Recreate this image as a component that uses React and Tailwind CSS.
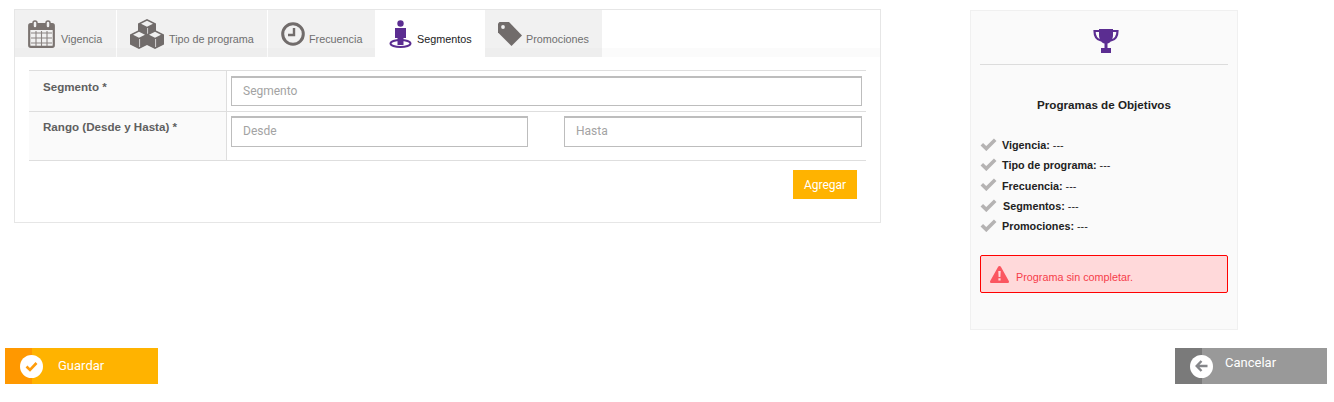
import React from "react";

const IconCalendar = () => (
  <svg width="27" height="28" viewBox="0 0 27 28" fill="none">
    <rect x="1.200" y="4.200" width="24.600" height="22.600" rx="1.500" stroke="#7a7370" strokeWidth="2.200" />
    <rect x="1" y="4" width="25" height="6" fill="#7a7370" />
    <path d="M3 13h21M3 18h21M3 23h21M8 11v15M13.500 11v15M19 11v15" stroke="#8a8482" strokeWidth="1.100" />
    <rect x="5" y="1" width="4" height="7" rx="2" fill="#f0f0f0" stroke="#7a7370" strokeWidth="1.500" />
    <rect x="18" y="1" width="4" height="7" rx="2" fill="#f0f0f0" stroke="#7a7370" strokeWidth="1.500" />
  </svg>
);

const Cube = ({ x, y }) => (
  <g transform={`translate(${x} ${y})`}>
    <path d="M0 4.500 9 0l9 4.500v10L9 19l-9-4.500z" fill="#716c6b" />
    <path d="M3 4.800 9 1.800l6 3-6 3z" fill="#f0f0f0" />
    <path d="M9.600 9v8" stroke="#f0f0f0" strokeWidth="0.800" />
  </g>
);

const IconCubes = () => (
  <svg width="34" height="30" viewBox="0 0 34 30">
    <Cube x="8" y="0" />
    <Cube x="0" y="11" />
    <Cube x="16" y="11" />
  </svg>
);

const IconClock = () => (
  <svg width="24" height="24" viewBox="0 0 24 24" fill="none">
    <circle cx="12" cy="12" r="10.300" stroke="#716c6b" strokeWidth="3" />
    <path d="M13 6v7H7" stroke="#716c6b" strokeWidth="2.400" />
  </svg>
);

const IconPerson = () => (
  <svg width="23" height="28" viewBox="0 0 23 28" fill="none">
    <ellipse cx="11.500" cy="23.500" rx="10" ry="3.500" stroke="#5b2d91" strokeWidth="2" />
    <circle cx="11.500" cy="3.500" r="3.200" fill="#5b2d91" />
    <path d="M6 8h11v10h-2.500v7h-6v-7H6z" fill="#5b2d91" />
  </svg>
);

const IconTag = () => (
  <svg width="24" height="24" viewBox="0 0 24 24">
    <path d="M0 1.500 1.500 0h9.500L24 13.500 13.500 24 0 10.500z" fill="#716c6b" />
    <circle cx="5" cy="5" r="1.900" fill="#f0f0f0" />
  </svg>
);

const IconTrophy = () => (
  <svg width="26" height="24" viewBox="0 0 26 24" fill="none" className="ml-[4px]">
    <path d="M6 2H1.500c0 5 1.500 8.500 6.500 9.500M20 2h4.500c0 5-1.500 8.500-6.500 9.500" stroke="#5b2d91" strokeWidth="2.200" />
    <path d="M6 0h14v6c0 5-3 8-5.500 8.500V19h3.500v5H8v-5h3.500v-4.500C9 14 6 11 6 6z" fill="#5b2d91" />
  </svg>
);

const IconCheck = () => (
  <svg width="17" height="13" viewBox="0 0 17 13" className="relative top-[-1px] shrink-0">
    <path d="M1.800 6.200 6.300 10.600 15.200 1.800" fill="none" stroke="#b5b3b3" strokeWidth="3.600" />
  </svg>
);

const IconWarning = () => (
  <svg width="19" height="17" viewBox="0 0 19 17">
    <path d="M9.500 0c.7 0 1.200.4 1.500 1l7.800 14c.5 1-.1 2-1.200 2H1.400c-1.100 0-1.700-1-1.200-2L8 1c.3-.6.800-1 1.500-1z" fill="#fb5660" />
    <path d="M8.300 5h2.400l-.3 6H8.600zM8.400 12.300h2.200v2.300H8.400z" fill="#ffd9da" />
  </svg>
);

const tabs = [
  { label: "Vigencia", icon: <IconCalendar />, width: "w-[101px] mr-px", gap: "gap-[6px]", pad: "pl-[13px]" },
  { label: "Tipo de programa", icon: <IconCubes />, width: "w-[150px] mr-px", gap: "gap-[5px]", pad: "pl-[13px]" },
  { label: "Frecuencia", icon: <IconClock />, width: "w-[107px]", gap: "gap-[4px]", pad: "pl-[13px]" },
  { label: "Segmentos", icon: <IconPerson />, width: "w-[110px]", gap: "gap-[5px]", pad: "pl-[14px]", active: true },
  { label: "Promociones", icon: <IconTag />, width: "w-[117px]", gap: "gap-[4px]", pad: "pl-[13px]" },
];

const summary = [
  { label: "Vigencia:", gap: "gap-[5px]" },
  { label: "Tipo de programa:", gap: "gap-[5px]" },
  { label: "Frecuencia:", gap: "gap-[5px]" },
  { label: "Segmentos:", gap: "gap-[6px]" },
  { label: "Promociones:", gap: "gap-[5px]" },
];

const Input = ({ placeholder, className = "" }) => (
  <input
    placeholder={placeholder}
    className={`border border-[#bdbdbd] border-t-2 bg-white px-[11px] pb-[2px] font-['Roboto',sans-serif] text-[12px] text-[#555] outline-none placeholder:text-[#a3a3a3] ${className}`}
  />
);

const ActionButton = ({ label, dark, light, icon, textClass, width }) => (
  <button className={`flex h-[36px] items-stretch font-['Roboto',sans-serif] text-[13px] text-white ${width} ${light}`}>
    <span className={`flex w-[27px] shrink-0 items-center justify-end ${dark}`}>
      <span className="relative left-[11px] flex size-[23px] items-center justify-center rounded-full bg-white">{icon}</span>
    </span>
    <span className={textClass}>{label}</span>
  </button>
);

export default function App() {
  return (
    <div className="h-[402px] w-[1334px] overflow-hidden bg-white font-['Liberation_Sans',sans-serif]">
      <div className="flex items-start pl-[14px] pt-[9px]">
        <div className="h-[214px] w-[867px] border border-[#e6e6e6] bg-white">
          <div className="flex h-[47px] bg-[linear-gradient(#ffffff_38px,#fbfbfb_38px)]">
            {tabs.map((t) => (
              <div
                key={t.label}
                className={`flex h-full shrink-0 items-center ${t.width} ${t.gap} ${t.pad} text-[10.8px] ${
                  t.active ? "bg-white text-[#222]" : "bg-[linear-gradient(#f1f1f1_38px,#eeeeee_38px)] text-[#6f6f6f]"
                }`}
              >
                {t.icon}
                <span className="mt-[11px]">{t.label}</span>
              </div>
            ))}
          </div>
          <div className="mx-[14px] mt-[13px] border-t border-[#dedede]">
            <div className="flex h-[41px] border-b border-[#dedede]">
              <div className="w-[198px] border-r border-[#dedede] bg-[#fafafa] pl-[14px] pt-[7px] text-[11.6px] font-bold text-[#5f5f5f]">
                Segmento *
              </div>
              <div className="pl-[4px] pt-[5px]">
                <Input placeholder="Segmento" className="h-[30px] w-[631px]" />
              </div>
            </div>
            <div className="flex h-[49px] border-b border-[#dedede]">
              <div className="w-[198px] border-r border-[#dedede] bg-[#fafafa] pl-[14px] pt-[6px] text-[11.6px] font-bold text-[#5f5f5f]">
                Rango (Desde y Hasta) *
              </div>
              <div className="flex gap-[36px] pl-[4px] pt-[4px]">
                <Input placeholder="Desde" className="h-[31px] w-[297px]" />
                <Input placeholder="Hasta" className="h-[31px] w-[298px]" />
              </div>
            </div>
            <div className="flex justify-end pr-[9px] pt-[9px]">
              <button className="h-[29px] w-[64px] bg-[#ffb300] font-['Roboto',sans-serif] text-[12px] text-white">Agregar</button>
            </div>
          </div>
        </div>

        <div className="ml-[89px] mt-px h-[320px] w-[268px] border border-[#f0f0f0] bg-[#fafafa] px-[9px]">
          <div className="flex h-[54px] items-start justify-center border-b border-[#dcdcdc] pt-[18px]">
            <IconTrophy />
          </div>
          <div className="mt-[33px] text-center text-[11.65px] font-bold leading-[14px] text-[#222]">
            Programas de Objetivos
          </div>
          <ul className="mt-[25px] flex flex-col gap-[4px]">
            {summary.map((s) => (
              <li key={s.label} className={`flex h-[16.300px] items-center ${s.gap} text-[10.8px] text-[#222]`}>
                <IconCheck />
                <span>
                  <b>{s.label}</b> ---
                </span>
              </li>
            ))}
          </ul>
          <div className="mt-[21px] flex h-[38px] items-center gap-[7px] rounded-[2px] border border-[#ff0000] bg-[#ffd9da] pl-[9px] text-[10.8px] text-[#f63d4a]">
            <IconWarning />
            <span className="mt-[5px]">Programa sin completar.</span>
          </div>
        </div>
      </div>

      <div className="mt-[18px] flex justify-between pl-[5px] pr-[7px]">
        <ActionButton
          label="Guardar"
          width="w-[153px]"
          light="bg-[#ffb300]"
          dark="bg-[#ff9800]"
          textClass="ml-[26px] self-center"
          icon={
            <svg width="13" height="11" viewBox="0 0 13 11">
              <path d="M1.500 5.500 5 9l6.500-7" fill="none" stroke="#ff9c0a" strokeWidth="2.600" />
            </svg>
          }
        />
        <ActionButton
          label="Cancelar"
          width="w-[152px]"
          light="bg-[#999999]"
          dark="bg-[#7a7a7a]"
          textClass="ml-[23px] mt-[5px] self-start"
          icon={
            <svg width="13" height="12" viewBox="0 0 13 12">
              <path d="M6.500 1 1.700 6l4.800 5M2 6h10.500" fill="none" stroke="#85868a" strokeWidth="2.400" />
            </svg>
          }
        />
      </div>
    </div>
  );
}
